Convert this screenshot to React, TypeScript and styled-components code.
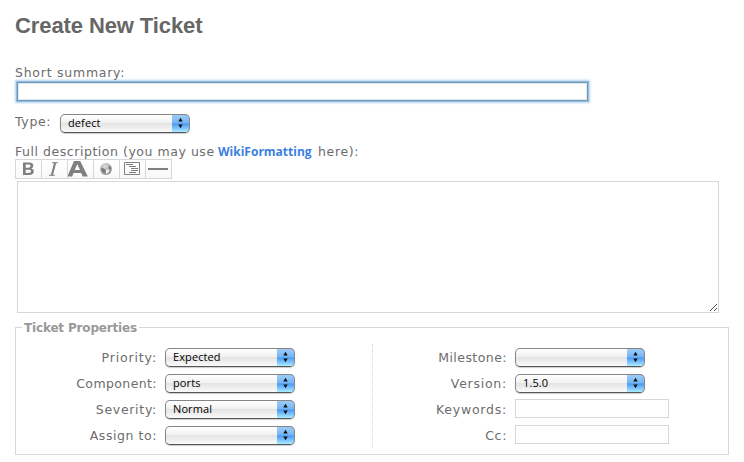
import React from "react";
import styled, { createGlobalStyle } from "styled-components";

const GlobalStyle = createGlobalStyle`
  * { box-sizing: border-box; }
  body { margin: 0; background: #fff; color: #6c6c6c; font: 12.5px/16px "DejaVu Sans", Verdana, sans-serif; overflow: hidden; }
`;

const Page = styled.main`
  width: 744px;
  height: 462px;
  padding: 12px 15px 0;
`;

const Title = styled.h1`
  margin: 0;
  height: 53px;
  font: bold 22px/28px "Liberation Sans", Arial, sans-serif;
  letter-spacing: -0.1px;
  color: #666;
`;

const Label = styled.span<{ $spacing?: number }>`
  display: block;
  height: 16px;
  white-space: pre;
  letter-spacing: ${(p) => p.$spacing ?? 0.65}px;
`;

const SummaryInput = styled.input`
  display: block;
  width: 571px;
  height: 19px;
  margin: 1px 0 0 2px;
  padding: 2px 4px;
  border: 1px solid #7398b2;
  outline: none;
  background: #fff;
  box-shadow: 0 0 0 1px #94bce0, 0 0 2px 2px #b5d4f0, inset 0 0 0 1px #dfe8f0;
`;

const TypeRow = styled.div`
  display: flex;
  gap: 5px;
  align-items: flex-end;
  height: 20px;
  margin-top: 12px;
`;

const TypeLabel = styled(Label)`
  width: 40px;
  margin-bottom: 3px;
`;

const DescriptionRow = styled.div`
  display: flex;
  height: 15px;
  margin-top: 11px;
`;

const WikiLink = styled.a`
  width: 94px;
  margin: 0 6px 0 auto;
  font: bold 12px/16px "Open Sans", "Noto Sans", sans-serif;
  letter-spacing: 0;
  color: #3b7fe0;
  white-space: nowrap;
`;

const Intro = styled.div`
  display: flex;
  width: 303px;
`;

const Toolbar = styled.div`
  display: flex;
  width: 157px;
  height: 20px;
  border: 1px solid #d7d7d7;
`;

const Tool = styled.button`
  display: block;
  width: 26px;
  height: 18px;
  padding: 0;
  border: 0;
  border-right: 1px solid #d7d7d7;
  background: linear-gradient(#fff, #f7faf8);
  &:last-child { width: 25px; border-right: 0; }
  svg { display: block; }
`;

const Editor = styled.div`
  position: relative;
  width: 702px;
  height: 132px;
  margin: 2px 0 0 2px;
`;

const TextArea = styled.textarea`
  display: block;
  width: 100%;
  height: 100%;
  border: 1px solid #d7d7d7;
  outline: none;
  resize: none;
`;

const Grip = styled.svg`
  position: absolute;
  right: 1px;
  bottom: 1px;
`;

const Properties = styled.fieldset`
  width: 714px;
  height: 135px;
  margin: 7px 0 0;
  padding: 9px 0 0;
  border: 1px solid #d7d7d7;
`;

const Legend = styled.legend`
  width: 117px;
  height: 15px;
  margin-left: 6px;
  padding: 0 2px;
  font-size: 12px;
  font-weight: bold;
  line-height: 16px;
  letter-spacing: -0.17px;
  color: #999;
  white-space: nowrap;
`;

const Columns = styled.div`
  display: grid;
  grid-template-columns: 357px 1fr;
  height: 104px;
`;

const Column = styled.div<{ $divided?: boolean }>`
  border-right: ${(p) => (p.$divided ? "1px dotted #d2d2d2" : "0")};
`;

const Field = styled.div<{ $labelWidth: number }>`
  display: grid;
  grid-template-columns: ${(p) => p.$labelWidth}px 155px;
  column-gap: 8px;
  align-items: start;
  height: 26px;
  padding-top: 4px;
  ${Label} { text-align: right; margin-top: 2px; }
`;

const SelectBox = styled.div`
  display: flex;
  width: 130px;
  height: 19px;
  overflow: hidden;
  border: 1px solid #777;
  border-color: #858585 #888 #555 #888;
  border-radius: 5px;
  background: linear-gradient(#fff 0%, #f1f1f1 45%, #e4e4e4 50%, #fafafa 100%);
  box-shadow: 0 1px 1px #ccc;
`;

const SelectValue = styled.span`
  flex: 1;
  padding-left: 7px;
  font: 500 11px/16px "Open Sans", "Noto Sans", sans-serif;
  letter-spacing: 0.1px;
  color: #000;
`;

const Stepper = styled.span`
  width: 18px;
  height: 19px;
  margin: -1px -1px 0 0;
  border: solid #07077f;
  border-width: 1px 1px 0 0;
  border-right-color: #245aad;
  border-radius: 0 5px 5px 0;
  background: linear-gradient(#9ecdf7 0%, #77b5f5 42%, #4c9cf0 50%, #88ccff 78%, #b6faff 100%);
  svg { display: block; }
`;

const TextInput = styled.input`
  width: 154px;
  height: 19px;
  margin-top: -1px;
  padding: 1px 4px;
  border: 1px solid #d7d7d7;
  outline: none;
`;

function Select({ value = "" }: { value?: string }) {
  return (
    <SelectBox>
      <SelectValue>{value}</SelectValue>
      <Stepper>
        <svg width="17" height="18" viewBox="0 0 17 18">
          <path d="M6.3 6.5L8.5 2.8L10.7 6.5ZM6.3 9.5L8.5 13.2L10.7 9.5Z" fill="#111" />
        </svg>
      </Stepper>
    </SelectBox>
  );
}

function Property({ label, value, input, width = 141, spacing }: { label: string; value?: string; input?: boolean; width?: number; spacing?: number }) {
  return (
    <Field $labelWidth={width}>
      <Label $spacing={spacing}>{label}</Label>
      {input ? <TextInput aria-label={label} /> : <Select value={value} />}
    </Field>
  );
}

function Tools() {
  return (
    <Toolbar>
      <Tool aria-label="Bold">
        <svg width="25" height="18" viewBox="0 0 25 18">
          <path fillRule="evenodd" fill="#7f7f7f" d="M7 2.5H13C16 2.5 17.3 3.7 17.3 5.8C17.3 7.3 16.5 8.2 15.2 8.5C17 8.9 17.8 10 17.8 11.6C17.8 14 16.1 15 13.2 15H7ZM9.7 4.6V7.7H12.2C13.8 7.7 14.5 7.2 14.5 6.1C14.5 5 13.8 4.6 12.2 4.6ZM9.7 9.8V12.9H12.5C14.1 12.9 15 12.4 15 11.3C15 10.2 14.1 9.8 12.5 9.8Z" />
        </svg>
      </Tool>
      <Tool aria-label="Italic">
        <svg width="25" height="18" viewBox="0 0 25 18" fill="none" stroke="#7f7f7f">
          <path d="M10 2.7H16M7 15.3H12.8" />
          <path d="M13.1 3L9.9 15" strokeWidth="2.1" />
        </svg>
      </Tool>
      <Tool aria-label="Heading">
        <svg width="25" height="18" viewBox="0 0 25 18">
          <path fillRule="evenodd" fill="#7f7f7f" d="M6 1H12.2L19.8 16.5H14.6L13.3 13H5.5L4.2 16.5H0V15ZM9.2 4.3L6.7 10H12Z" />
        </svg>
      </Tool>
      <Tool aria-label="Link">
        <svg width="25" height="18" viewBox="0 0 25 18">
          <defs>
            <radialGradient id="globe" cx="42%" cy="28%" r="68%">
              <stop offset="0" stopColor="#ddd" />
              <stop offset="1" stopColor="#909090" />
            </radialGradient>
          </defs>
          <circle cx="12" cy="9" r="5.9" fill="url(#globe)" />
          <path d="M7 8L10 8.5L12 11L10.8 13L8.2 11.5ZM14.5 7L16.2 6L17.2 8.8L15.5 10Z" fill="#777" />
          <path d="M12 10L15.5 9.5L14.5 12.5L12 14Z" fill="#eee" />
        </svg>
      </Tool>
      <Tool aria-label="Code block">
        <svg width="25" height="18" viewBox="0 0 25 18" fill="none" stroke="#7f7f7f">
          <path d="M4.5 2.5H19.5V14.5H4.5ZM6 4.5H13M9 6.5H16M11 8.5H18M11 10.5H18M9 12.5H16" />
        </svg>
      </Tool>
      <Tool aria-label="Horizontal rule">
        <svg width="25" height="18" viewBox="0 0 25 18">
          <path d="M2 8H22V10H2Z" fill="#7f7f7f" />
        </svg>
      </Tool>
    </Toolbar>
  );
}

export default function App() {
  return (
    <>
      <GlobalStyle />
      <Page>
        <Title>Create New Ticket</Title>
        <Label $spacing={0.75}>Short summary:</Label>
        <SummaryInput aria-label="Short summary" />
        <TypeRow>
          <TypeLabel>Type:</TypeLabel>
          <Select value="defect" />
        </TypeRow>
        <DescriptionRow>
          <Intro>
            <Label $spacing={0.54}>Full description (you may use</Label>
            <WikiLink>WikiFormatting</WikiLink>
          </Intro>
          <Label>here):</Label>
        </DescriptionRow>
        <Tools />
        <Editor>
          <TextArea aria-label="Full description" />
          <Grip width="9" height="9" viewBox="0 0 9 9" stroke="#555" fill="none">
            <path d="M1 8L8 1M5 8L8 5" />
          </Grip>
        </Editor>
        <Properties>
          <Legend>Ticket Properties</Legend>
          <Columns>
            <Column $divided>
              <Property label="Priority:" value="Expected" spacing={0.85} />
              <Property label="Component:" value="ports" spacing={0.4} />
              <Property label="Severity:" value="Normal" spacing={0.7} />
              <Property label="Assign to:" spacing={0.56} />
            </Column>
            <Column>
              <Property width={134} label="Milestone:" spacing={0.45} />
              <Property width={134} label="Version:" value="1.5.0" spacing={0.75} />
              <Property width={134} label="Keywords:" input spacing={0.77} />
              <Property width={134} label="Cc:" input />
            </Column>
          </Columns>
        </Properties>
      </Page>
    </>
  );
}
